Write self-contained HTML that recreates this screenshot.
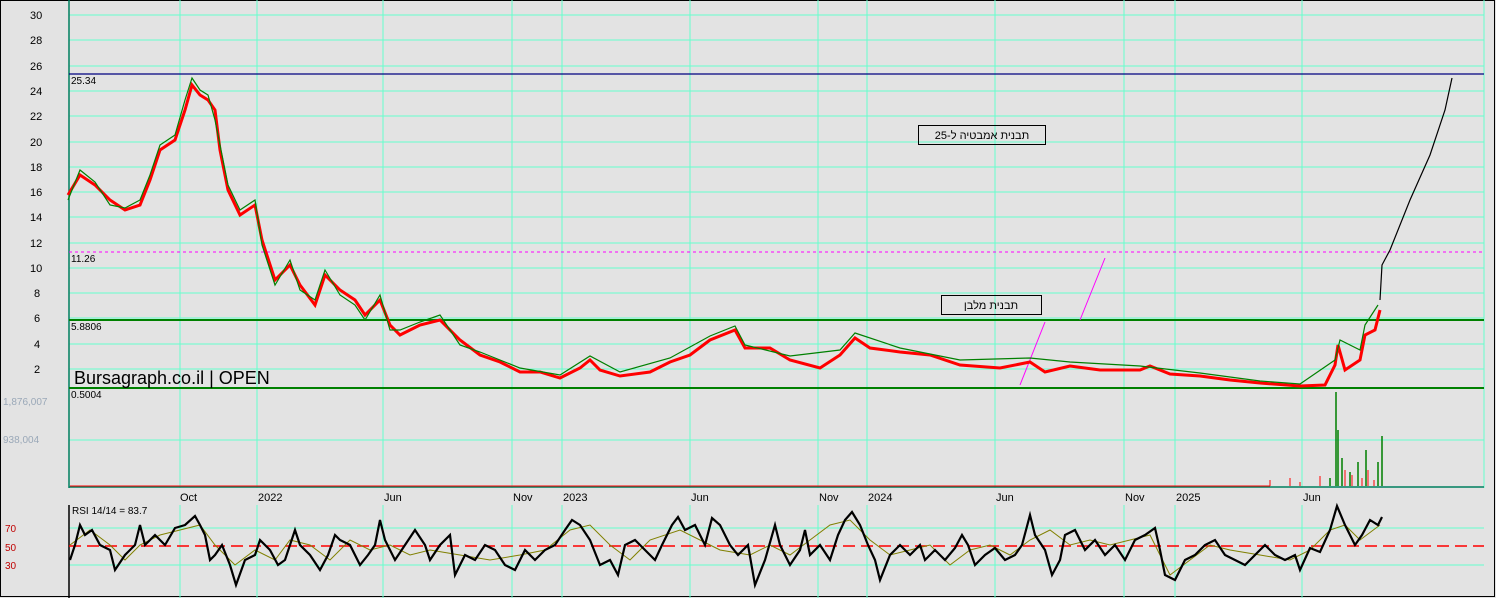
<!DOCTYPE html>
<html><head><meta charset="utf-8"><style>
html,body{margin:0;padding:0;width:1496px;height:598px;overflow:hidden;background:#e3e3e3}
svg{display:block}
text{font-family:"Liberation Sans",sans-serif}
</style></head><body>
<svg width="1496" height="598" xmlns="http://www.w3.org/2000/svg">
<rect x="0.5" y="0.5" width="1494" height="596" fill="#e3e3e3" stroke="#000"/>
<g stroke="#66ffcc" stroke-width="1">
<path d="M69 15H1484M69 40H1484M69 66H1484M69 91H1484M69 116H1484M69 142H1484M69 167H1484M69 192H1484M69 217H1484M69 243H1484M69 268H1484M69 293H1484M69 318H1484M69 344H1484M69 369H1484M69 440H1484M69 528H1484M69 565H1484"/>
<path d="M180 0V488M257 0V488M383 0V488M512 0V488M562 0V488M690 0V488M818 0V488M867 0V488M995 0V488M1124 0V488M1175 0V488M1302 0V488M1484 0V488"/>
<path d="M180 505V598M257 505V598M383 505V598M512 505V598M562 505V598M690 505V598M818 505V598M867 505V598M995 505V598M1124 505V598M1175 505V598M1302 505V598"/>
</g>
<line x1="69" y1="0" x2="69" y2="488" stroke="#008060" stroke-width="1.5"/>
<line x1="69" y1="505" x2="69" y2="598" stroke="#000" stroke-width="1.5"/>
<line x1="69" y1="487" x2="1484" y2="487" stroke="#008060" stroke-width="1.5"/>
<g font-size="11" fill="#000">
<text x="30" y="19">30</text><text x="30" y="44">28</text><text x="30" y="70">26</text><text x="30" y="95">24</text><text x="30" y="120">22</text><text x="30" y="146">20</text><text x="30" y="171">18</text><text x="30" y="196">16</text><text x="30" y="221">14</text><text x="30" y="247">12</text><text x="30" y="272">10</text><text x="34" y="297">8</text><text x="34" y="322">6</text><text x="34" y="348">4</text><text x="34" y="373">2</text>
</g>
<g font-size="10" fill="#9aa8b8"><text x="3" y="405">1,876,007</text><text x="3" y="443">938,004</text></g>
<g font-size="10" fill="#c00000"><text x="5" y="532">70</text><text x="5" y="551">50</text><text x="5" y="569">30</text></g>
<g font-size="11" fill="#000">
<text x="180" y="501">Oct</text><text x="258" y="501">2022</text><text x="384" y="501">Jun</text><text x="513" y="501">Nov</text><text x="563" y="501">2023</text><text x="691" y="501">Jun</text><text x="819" y="501">Nov</text><text x="868" y="501">2024</text><text x="996" y="501">Jun</text><text x="1125" y="501">Nov</text><text x="1176" y="501">2025</text><text x="1303" y="501">Jun</text>
</g>
<line x1="69" y1="74" x2="1484" y2="74" stroke="#000080" stroke-width="1.2"/>
<line x1="69" y1="252" x2="1484" y2="252" stroke="#ff00ff" stroke-width="1" stroke-dasharray="3,3"/>
<line x1="69" y1="320" x2="1484" y2="320" stroke="#008000" stroke-width="2"/>
<line x1="69" y1="388" x2="1484" y2="388" stroke="#008000" stroke-width="2"/>
<g font-size="10" fill="#000"><text x="71" y="84">25.34</text><text x="71" y="262">11.26</text><text x="71" y="330">5.8806</text><text x="71" y="398">0.5004</text></g>
<text x="74" y="384" font-size="18" fill="#000">Bursagraph.co.il | OPEN</text>
<g stroke="#ff00ff" stroke-width="1"><line x1="1020" y1="385" x2="1045" y2="322"/><line x1="1080" y1="320" x2="1105" y2="258"/></g>
<polyline fill="none" stroke="#ff0000" stroke-width="3" points="68,195 80,175 95,185 110,200 125,210 140,205 150,180 160,150 175,140 185,110 192,85 200,95 208,100 215,110 220,150 228,190 240,215 255,205 262,240 275,280 290,265 300,285 315,305 325,275 340,290 355,300 365,315 380,300 390,325 400,335 420,325 440,320 460,340 480,355 500,362 520,372 540,372 560,378 580,368 590,360 600,370 620,376 650,372 670,362 690,355 710,340 735,330 745,348 770,348 790,360 820,368 840,355 855,338 870,348 900,352 930,355 960,365 1000,368 1030,362 1045,372 1070,366 1100,370 1140,370 1150,366 1170,374 1200,376 1230,380 1260,383 1300,386 1325,385 1335,365 1338,345 1345,370 1360,360 1365,335 1375,330 1380,310"/>
<polyline fill="none" stroke="#008000" stroke-width="1.2" points="68,200 80,170 95,182 110,205 125,208 140,200 150,175 160,145 175,135 185,100 192,78 200,90 208,95 215,120 228,185 240,210 255,200 262,245 275,285 290,260 300,290 315,300 325,270 340,295 355,305 365,320 380,295 390,330 400,330 420,322 440,315 460,345 480,352 520,368 560,375 590,356 620,372 670,358 710,336 735,326 745,345 790,356 840,350 855,333 900,348 960,360 1030,358 1070,362 1140,366 1200,373 1260,381 1300,384 1335,360 1340,340 1360,350 1365,325 1378,305"/>
<polyline fill="none" stroke="#000" stroke-width="1.2" points="1380,300 1382,265 1390,250 1410,200 1430,155 1445,110 1452,78"/>
<rect x="918.5" y="125.5" width="127" height="19" fill="none" stroke="#000"/>
<text x="982" y="139" font-size="11" text-anchor="middle" font-family="Liberation Sans,DejaVu Sans,sans-serif">תבנית אמבטיה ל-25</text>
<rect x="941.5" y="295.5" width="100" height="19" fill="none" stroke="#000"/>
<text x="991" y="309" font-size="11" text-anchor="middle" font-family="Liberation Sans,DejaVu Sans,sans-serif">תבנית מלבן</text>
<g stroke="#ff0000" stroke-width="1"><path d="M70 486h1200M1270 486V480M1290 486V478M1300 486V482M1320 486V476M1345 486V470M1352 486V475M1362 486V478M1368 486V470M1374 486V480"/></g>
<g stroke="#008000" stroke-width="1.5"><path d="M1336 486V392M1338 486V430M1342 486V458M1358 486V462M1366 486V450M1378 486V462M1382 486V436M1330 486V478M1350 486V472"/></g>
<text x="72" y="514" font-size="10" fill="#000">RSI 14/14 = 83.7</text>
<line x1="69" y1="546" x2="1484" y2="546" stroke="#ff0000" stroke-width="1.5" stroke-dasharray="12,6"/>
<polyline fill="none" stroke="#808000" stroke-width="1" points="70,545 90,530 110,545 125,560 140,545 160,535 180,530 200,525 215,545 235,565 255,550 275,560 290,540 310,545 330,560 350,540 370,550 390,545 410,555 430,550 460,555 490,560 520,555 545,550 570,530 590,525 610,545 630,560 650,540 680,530 700,540 720,550 750,555 770,545 790,555 810,540 830,525 850,520 870,540 890,555 910,550 930,545 950,565 970,550 990,545 1010,555 1030,540 1050,530 1070,545 1090,540 1110,545 1130,540 1150,535 1170,575 1190,560 1210,545 1230,550 1260,555 1290,560 1310,550 1330,530 1345,525 1360,540 1380,525"/>
<polyline fill="none" stroke="#000" stroke-width="2.2" points="70,560 75,545 80,525 85,535 92,530 100,545 110,550 115,570 125,555 135,545 140,525 145,545 155,535 165,545 175,528 185,525 195,516 200,525 205,535 210,560 215,555 222,545 230,565 236,585 245,560 255,555 260,540 270,550 278,565 285,560 295,530 300,545 310,555 320,570 328,555 335,535 340,540 350,545 360,565 368,555 375,545 380,520 385,540 395,560 405,545 415,530 425,545 430,560 440,545 450,535 455,575 465,555 475,560 485,545 495,550 505,565 515,570 525,550 535,560 545,550 555,545 565,530 572,520 580,525 590,540 600,565 610,560 618,575 625,545 635,540 645,550 655,560 662,545 672,525 678,517 685,530 695,525 705,545 712,518 720,525 730,545 738,555 748,545 755,585 765,560 775,525 780,545 790,565 800,550 805,530 810,555 820,545 830,560 838,535 845,520 852,512 860,525 868,545 875,560 880,580 890,555 900,545 910,555 920,545 925,560 935,550 945,560 955,548 962,535 968,545 975,565 985,555 995,548 1005,560 1015,555 1022,545 1030,515 1035,535 1045,550 1052,575 1060,560 1065,535 1075,530 1085,550 1095,540 1105,555 1115,545 1125,560 1135,540 1145,535 1155,528 1160,550 1165,575 1175,580 1185,560 1195,555 1205,545 1215,540 1225,555 1235,560 1245,565 1255,555 1265,545 1275,555 1285,560 1295,555 1300,570 1310,548 1320,552 1330,530 1337,506 1345,525 1355,545 1362,535 1370,520 1378,525 1382,517"/>
</svg>
</body></html>
